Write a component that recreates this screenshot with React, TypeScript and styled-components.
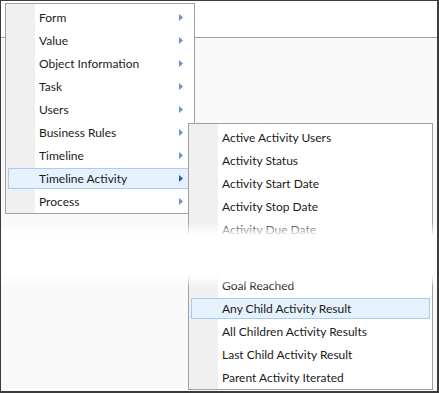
import styled, { createGlobalStyle } from "styled-components";

const GlobalStyle = createGlobalStyle`
  body {
    margin: 0;
    background: #ffffff;
    font-family: "Segoe UI", Lato, "Liberation Sans", sans-serif;
  }
`;

const mainItems = [
  "Form",
  "Value",
  "Object Information",
  "Task",
  "Users",
  "Business Rules",
  "Timeline",
  "Timeline Activity",
  "Process",
];

const subTop = [
  "Active Activity Users",
  "Activity Status",
  "Activity Start Date",
  "Activity Stop Date",
  "Activity Due Date",
];

const subBottom = [
  "Goal Reached",
  "Any Child Activity Result",
  "All Children Activity Results",
  "Last Child Activity Result",
  "Parent Activity Iterated",
];

const Window = styled.div`
  position: relative;
  width: 439px;
  height: 393px;
  box-sizing: border-box;
  border: 1px solid #3c3c3c;
  border-right-width: 2px;
  border-bottom-width: 2px;
  background: #f9f9f9;
  overflow: hidden;
`;

const TopBar = styled.div`
  height: 36px;
  background: #ffffff;
  border-bottom: 1px solid #a0a0a0;
`;

const Menu = styled.div<{ $left: number; $top: number; $width: number }>`
  position: absolute;
  left: ${(p) => p.$left}px;
  top: ${(p) => p.$top}px;
  width: ${(p) => p.$width}px;
  box-sizing: border-box;
  display: flex;
  flex-direction: column;
  padding-top: 2px;
  border: 1px solid #a0a0a0;
  background: linear-gradient(to right, #f0f0f0 29px, #ffffff 29px);
`;

const Item = styled.div<{ $active?: boolean }>`
  display: flex;
  align-items: center;
  justify-content: space-between;
  height: 21px;
  margin: 1px 2px;
  box-sizing: border-box;
  padding: 0 8px 0 30px;
  border: 1px solid ${(p) => (p.$active ? "#a8cdf2" : "transparent")};
  background: ${(p) => (p.$active ? "#e5f1fc" : "transparent")};
  color: #1b1b1b;
  font-size: 12px;
  line-height: 19px;
  white-space: nowrap;
`;

const Gap = styled.div`
  height: 33px;
`;

const Fade = styled.div`
  position: absolute;
  left: 0;
  right: 0;
  top: 221px;
  height: 66px;
  z-index: 5;
  background: linear-gradient(
    to bottom,
    rgba(255, 255, 255, 0) 0,
    #ffffff 14px,
    #ffffff 53px,
    rgba(255, 255, 255, 0) 66px
  );
`;

const Arrow = ({ active }: { active?: boolean }) => (
  <svg width="4" height="7" viewBox="0 0 4 7">
    <path d="M0 0 L4 3.5 L0 7 Z" fill={active ? "#2c57c2" : "#6f8fc9"} />
  </svg>
);

const App = () => {
  return (
    <>
      <GlobalStyle />
      <Window>
        <TopBar />
        <Menu $left={4} $top={2} $width={190}>
          {mainItems.map((label) => (
            <Item key={label} $active={label === "Timeline Activity"}>
              <span>{label}</span>
              <Arrow active={label === "Timeline Activity"} />
            </Item>
          ))}
        </Menu>
        <Menu $left={187} $top={122} $width={245}>
          {subTop.map((label) => (
            <Item key={label}>
              <span>{label}</span>
            </Item>
          ))}
          <Gap />
          {subBottom.map((label) => (
            <Item key={label} $active={label === "Any Child Activity Result"}>
              <span>{label}</span>
            </Item>
          ))}
        </Menu>
        <Fade />
      </Window>
    </>
  );
};

export default App;
